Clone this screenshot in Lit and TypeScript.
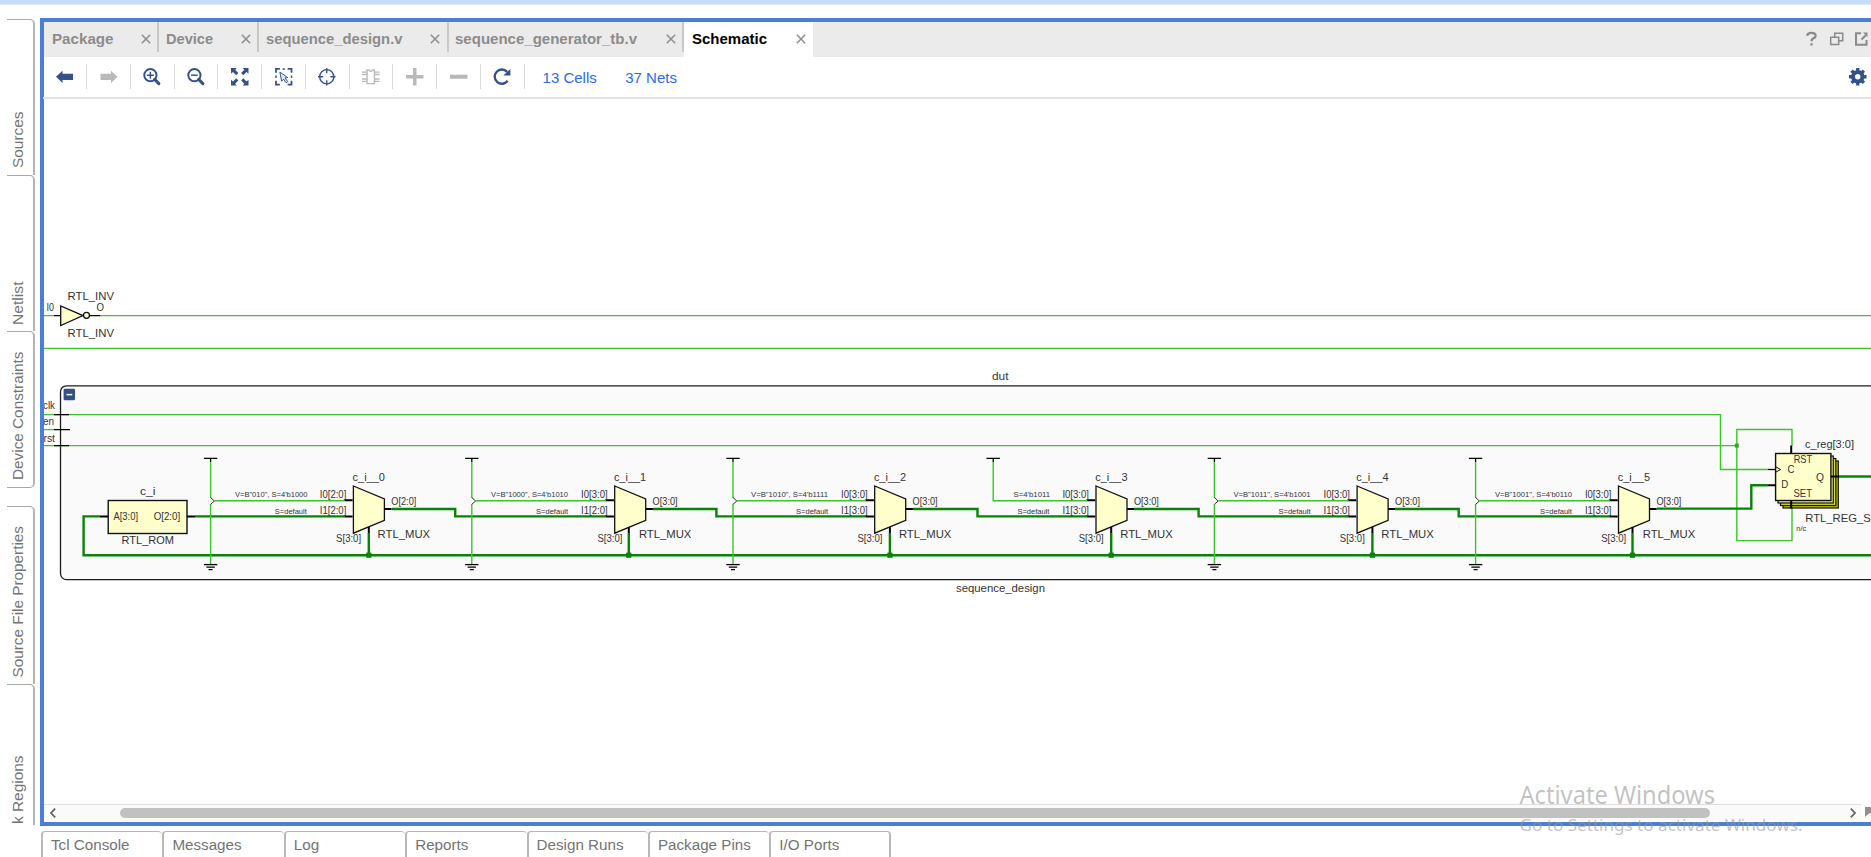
import { LitElement, html, svg, css } from "lit";
import { customElement } from "lit/decorators.js";

const GREEN = "#3cc52a";
const BUS = "#078407";

const label = (x: number, y: number, w: number, s: string, size = 11.5) =>
  svg`<text x=${x} y=${y} font-size=${size} textLength=${w} lengthAdjust="spacingAndGlyphs">${s}</text>`;
const wire = (d: string) => svg`<path d=${d} stroke=${GREEN} stroke-width="1.4" fill="none"/>`;
const bus = (d: string) => svg`<path d=${d} stroke=${BUS} stroke-width="2.4" fill="none"/>`;
const pin = (d: string, w = 2) => svg`<path d=${d} stroke="#000" stroke-width=${w} fill="none"/>`;

interface Mux {
  x: number; s: number; rail: number; out: string; in0: string; in1: string;
  value: string; vx: number; vw: number; from: string; ground: boolean;
}
const muxes: Mux[] = [
  { x: 352.6, s: 368.8, rail: 210.6, out: "O[2:0]", in0: "I0[2:0]", in1: "I1[2:0]", value: `V=B"010", S=4'b1000`, vx: 235, vw: 72.5, from: "M195 516.4", ground: true },
  { x: 613.9, s: 628.8, rail: 471.8, out: "O[3:0]", in0: "I0[3:0]", in1: "I1[2:0]", value: `V=B"1000", S=4'b1010`, vx: 491, vw: 77, from: "M392 509H455.2V516.4", ground: true },
  { x: 873.9, s: 889.9, rail: 733, out: "O[3:0]", in0: "I0[3:0]", in1: "I1[3:0]", value: `V=B"1010", S=4'b1111`, vx: 751, vw: 77, from: "M653 509H716.4V516.4", ground: true },
  { x: 1095.2, s: 1111.2, rail: 993.2, out: "O[3:0]", in0: "I0[3:0]", in1: "I1[3:0]", value: `S=4'b1011`, vx: 1013.5, vw: 36.5, from: "M913 509H977.5V516.4", ground: false },
  { x: 1356.3, s: 1372.4, rail: 1214.4, out: "O[3:0]", in0: "I0[3:0]", in1: "I1[3:0]", value: `V=B"1011", S=4'b1001`, vx: 1233.5, vw: 77, from: "M1134 509H1198.6V516.4", ground: true },
  { x: 1617.7, s: 1632.5, rail: 1475.6, out: "O[3:0]", in0: "I0[3:0]", in1: "I1[3:0]", value: `V=B"1001", S=4'b0110`, vx: 1495, vw: 77, from: "M1395 509H1458.7V516.4", ground: true },
];

const muxView = (m: Mux, i: number) => {
  const { x, s, rail } = m;
  return svg`
    ${bus(`${m.from}H${x - 8}`)}
    ${m.ground
      ? svg`${wire(`M${rail} 462V498M${rail} 504V564M${rail + 4} 500.7H${x - 8}`)}
          <path d=${`M${rail} 497.5L${rail + 3.8} 501L${rail} 504.3`} stroke="#333" stroke-width="1" fill="none"/>
          ${pin(`M${rail - 6.7} 564.6H${rail + 6.7}`, 1.3)}
          ${pin(`M${rail - 4.2} 567.1H${rail + 4.2}M${rail - 2} 569.6H${rail + 2}`, 1.3)}`
      : wire(`M${rail} 462V500.7H${x - 8}`)}
    ${pin(`M${rail - 6.7} 458.4H${rail + 6.7}M${rail} 458.4V462`, 1.3)}
    ${bus(`M${s} 533V555`)}
    <rect x=${s - 2.6} y="552.6" width="5.2" height="5.2" fill=${BUS}/>
    <path d=${`M${x + 0.8} 486L${x + 31.8} 499V520.3L${x + 0.8} 533.2Z`} fill="#ffffcc" stroke="#111" stroke-width="1.3"/>
    ${pin(`M${x - 8} 500.2H${x}M${x - 8} 516.4H${x}M${x + 32} 509H${x + 39}M${s} 527V533`)}
    ${label(x, 480.6, 32.3, `c_i__${i}`)}
    ${label(x - 32.8, 497.8, 26.5, m.in0, 11)}
    ${label(x - 32.8, 514, 26.5, m.in1, 11)}
    ${label(x + 38.7, 505.3, 25, m.out, 11)}
    ${label(x - 16.5, 541.5, 25, "S[3:0]", 11)}
    ${label(x + 25, 537.8, 52.5, "RTL_MUX")}
    ${label(m.vx, 497.3, m.vw, m.value, 7)}
    ${label(x - 77.8, 513.7, 32, "S=default", 7)}`;
};

@customElement("schematic-canvas")
export class SchematicCanvas extends LitElement {
  static styles = css`
    :host { display: block; }
    svg { display: block; width: 100%; height: 100%; }
    text { font-family: "Liberation Sans", Arial, sans-serif; fill: #333; }
  `;
  render() {
    return html`<svg viewBox="44 99 1827 705" preserveAspectRatio="xMinYMin">
      ${wire("M44 315.6H54M100 315.6H1871M44 348.4H1871")}
      ${pin("M54 315.6H60.5M89 315.6H100", 1.3)}
      <path d="M60.7 306V325.6L83 315.6Z" fill="#ffffcc" stroke="#111" stroke-width="1.3"/>
      <circle cx="86.5" cy="315.3" r="3" fill="#ffffcc" stroke="#111" stroke-width="1.3"/>
      ${label(46.5, 311.4, 7.5, "I0", 10.5)} ${label(96.5, 311.4, 7.5, "O", 10.5)}
      ${label(67.5, 300.2, 46.5, "RTL_INV")} ${label(67.5, 336.6, 46.5, "RTL_INV")}

      <rect x="60.5" y="385.8" width="1830" height="193.8" rx="6" fill="#fafafa" stroke="#1c1c1c" stroke-width="1.3"/>
      ${label(992, 380.3, 16.5, "dut")} ${label(956, 591.7, 89, "sequence_design")}
      <rect x="63.6" y="388.8" width="11.4" height="11.4" rx="1.3" fill="#324f87"/>
      <path d="M66.5 394.6H72.3" stroke="#fff" stroke-width="1.5"/>

      ${wire("M44 414.6H1720.5V469.5H1768M44 429.6H54M44 445.6H1736.8M1792 446V429.5H1736.8V540.6H1792V508")}
      ${pin("M54 414.6H69M54 429.6H70M54 445.6H69", 1.3)}
      ${label(43, 409.3, 12, "clk", 10.5)} ${label(43, 425.3, 11, "en", 10.5)} ${label(43.5, 441.7, 11.5, "rst", 10.5)}
      <rect x="1734.8" y="443.6" width="4" height="4" fill="#2cab1e"/>

      ${bus("M1871 555.2H83.6V516.4H100")}
      ${bus("M1657 508.6H1751.3V485.2H1768M1838 476.5H1871")}
      <rect x="108.2" y="500.5" width="78.8" height="33" fill="#ffffcc" stroke="#111" stroke-width="1.4"/>
      ${pin("M100 516.4H108M187 516.4H195")}
      ${label(140, 495, 15.5, "c_i")} ${label(121.5, 544, 52.5, "RTL_ROM")}
      ${label(113.5, 520.4, 24.5, "A[3:0]", 11)} ${label(153.7, 520.4, 26.5, "O[2:0]", 11)}

      ${muxes.map(muxView)}

      <rect x="1783" y="461" width="55.3" height="47" fill="#b8b81e" stroke="#111" stroke-width="1.2"/>
      <rect x="1780.5" y="458.5" width="55.3" height="47" fill="#e0e040" stroke="#111" stroke-width="1.2"/>
      <rect x="1778" y="456" width="55.3" height="47" fill="#e8e890" stroke="#111" stroke-width="1.2"/>
      <rect x="1775.6" y="453.5" width="55.3" height="47" fill="#ffffcc" stroke="#111" stroke-width="1.4"/>
      ${pin("M1791.2 445.5V453M1791.2 501V508.5M1768 485.2H1775.5M1831 476.5H1838.5")}
      ${pin("M1768 469.5H1776", 1.3)}
      <path d="M1776 467L1780.6 469.5L1776 472" fill="none" stroke="#111" stroke-width="1"/>
      ${label(1805, 447.9, 49, "c_reg[3:0]")} ${label(1793.7, 463.2, 18.5, "RST")}
      ${label(1787.6, 473.4, 7, "C")} ${label(1781.3, 488, 7, "D")}
      ${label(1816, 480.5, 8, "Q")} ${label(1793.5, 496.9, 18.5, "SET")}
      ${label(1805.3, 521.5, 65.5, "RTL_REG_S")} ${label(1796.3, 530.9, 10, "n/c", 7)}
    </svg>`;
  }
}

const icon = (c: unknown) => html`<svg class="icon" viewBox="0 0 18 18">${c}</svg>`;
const cross = html`<svg class="cross" viewBox="0 0 10 10"><path d="M.8.8L9.2 9.2M9.2.8L.8 9.2" stroke="#8c8c8c" stroke-width="1.5"/></svg>`;
const N = "#33528c";
const G = "#b9b9b9";

const tools = [
  svg`<path d="M0 9L6.7 2.7V6H17.5V12.3H6.7V15.3Z" fill=${N}/>`,
  svg`<path d="M18 9L11.3 2.7V6H.5V12.3H11.3V15.3Z" fill=${G}/>`,
  svg`<circle cx="7.6" cy="7.4" r="6.3" fill="none" stroke=${N} stroke-width="2"/><path d="M4 7.4H11.2M7.6 3.8V11" stroke=${N} stroke-width="1.5"/><path d="M12 11.8L16.3 16" stroke=${N} stroke-width="3.2" stroke-linecap="round"/>`,
  svg`<circle cx="7.6" cy="7.4" r="6.3" fill="none" stroke=${N} stroke-width="2"/><path d="M4.2 7.4H11" stroke=${N} stroke-width="1.5"/><path d="M12 11.8L16.3 16" stroke=${N} stroke-width="3.2" stroke-linecap="round"/>`,
  svg`<path d="M0 0H6L4.3 1.8L7.6 5.2L5.4 7.4L2 4L0 6ZM18 0V6L16 4L12.6 7.4L10.4 5.2L13.7 1.8L12 0ZM0 18V12L2 14L5.4 10.6L7.6 12.8L4.3 16.2L6 18ZM18 18H12L13.7 16.2L10.4 12.8L12.6 10.6L16 14L18 12Z" fill=${N}/>`,
  svg`<path d="M1 5V1H5M13 1H17V5M17 13V17H13M5 17H1V13" fill="none" stroke=${N} stroke-width="1.8"/><path d="M7.8 1H10.2M17 7.8V10.2M1 7.8V10.2" fill="none" stroke=${N} stroke-width="1.5"/><path d="M5 4.2L13 9.8L10.3 10.3L13.2 14L11.4 15.2L8.8 11.5L6.8 13.6Z" fill="#dfe5ef" stroke=${N} stroke-width="1"/>`,
  svg`<circle cx="9" cy="9" r="7.3" fill="none" stroke=${N} stroke-width="1.4"/><path d="M9 0V5.3M9 12.7V18M0 9H5.3M12.7 9H18" stroke=${N} stroke-width="1.4"/>`,
  svg`<path d="M5.2 2H7.5C7.5 4 10.5 4 10.5 2H12.8V16H5.2ZM0 4.2H4.5M0 6.7H4.5M0 11.3H4.5M0 13.8H4.5M13.5 4.2H18M13.5 6.7H18M13.5 11.3H18M13.5 13.8H18" fill="none" stroke=${G} stroke-width="1.4"/>`,
  svg`<path d="M0 9H18M9 0V18" stroke=${G} stroke-width="3.6"/>`,
  svg`<path d="M0 9H18" stroke=${G} stroke-width="4.2"/>`,
  svg`<path d="M15 13.2A7.3 7.3 0 1 1 14.5 4" fill="none" stroke=${N} stroke-width="2.5"/><path d="M17.9 1V7.8H10.6Z" fill=${N}/>`,
];

const fileTabs = [
  ["Package", 114, 61.5], ["Device", 100, 47], ["sequence_design.v", 189.5, 136.5], ["sequence_generator_tb.v", 235.5, 182],
] as const;
const sideTabs = [
  ["Sources", 156, 7, 56.5], ["Netlist", 156, 6, 43.5], ["Device Constraints", 156.5, 6.5, 128.5],
  ["Source File Properties", 178.5, 7, 151.5], ["k Regions", 141, 0, 68.5],
] as const;
const bottomTabs = ["Tcl Console", "Messages", "Log", "Reports", "Design Runs", "Package Pins", "I/O Ports"];

@customElement("app-root")
export class AppRoot extends LitElement {
  static styles = css`
    :host { display: block; width: 1871px; height: 857px; position: relative; overflow: hidden; background: #fff; font: 15px "Liberation Sans", Arial, sans-serif; }
    * { box-sizing: border-box; }
    svg { display: block; flex: none; }
    .top { height: 5px; background: #cbddff; border-bottom: 1px solid #e0eaff; }
    .main { display: flex; height: 820px; }
    .side { width: 40px; padding: 14px 5px 0 7px; height: 820px; display: flex; flex-direction: column; overflow: hidden; }
    .stab { flex: none; width: 28px; border: 2px solid #b4b4b4; border-left: 0; border-top: 1px solid #a8a8a8; border-bottom: 0; border-radius: 0 5px 0 0; display: flex; justify-content: center; align-items: flex-end; padding-right: 4px; }
    .stab.end { border-bottom: 1px solid #a8a8a8; border-radius: 0 5px 5px 0; margin-bottom: 18px; }
    .stab text { font-size: 15.5px; fill: #737373; }
    .panel { margin-top: 12.5px; flex: 1; height: 808px; border: 4px solid #4a7fd5; border-right: 0; display: flex; flex-direction: column; min-width: 0; }
    .tabs { height: 35px; flex: none; background: #ebebeb; display: flex; align-items: stretch; color: #8c8c8c; }
    .tab { display: flex; align-items: center; justify-content: space-between; padding: 0 7.5px 1px 7.5px; }
    .tab.on { width: 129px; color: #000; background: #fff; padding-left: 8px; }
    .name { overflow: visible; height: 18px; }
    .name text { font-weight: bold; font-size: 15px; fill: currentColor; }
    .div { width: 2px; height: 30px; background: #c8c8c8; margin-right: -1px; margin-left: -1px; flex: none; }
    .gap { width: 1px; flex: none; }
    .cross { width: 10px; height: 10px; }
    .wins { margin-left: auto; display: flex; align-items: center; }
    .tools { height: 42px; flex: none; display: flex; align-items: center; border-bottom: 2px solid #e2e2e2; margin-left: -0.7px; }
    .tool { width: 43.75px; height: 25px; flex: none; display: flex; align-items: center; justify-content: center; border-right: 1.6px solid #dadada; }
    .icon { width: 17.5px; height: 17.5px; overflow: visible; }
    .count { color: #2a6af0; font-size: 15px; padding-top: 1px; }
    .gear { margin-left: auto; width: 18px; margin-right: 4.5px; }
    schematic-canvas { flex: none; height: 705px; }
    .scroll { height: 17px; flex: none; display: flex; align-items: center; background: #fafafa; border-top: 1px solid #dedede; }
    .thumb { height: 10px; width: 1590px; border-radius: 5px; background: #c1c1c1; margin-left: 64px; }
    .left { margin-left: 6px; }
    .right { margin-left: 139.5px; }
    .corner { width: 10px; height: 17px; background: #fff; margin-left: auto; padding: 3px 0 0 4px; overflow: hidden; }
    .bottom { display: flex; padding: 5.5px 0 0 41px; height: 32px; }
    .btab { width: 121.4px; flex: none; height: 28px; border: 2px solid #b8b8b8; border-top-width: 1.5px; border-right-width: 0; border-bottom: 0; border-radius: 4px 4px 0 0; padding: 4.5px 0 0 8px; color: #737373; font-size: 15.2px; }
    .btab:last-child { border-right-width: 2px; }
    .mark { position: absolute; left: 1510px; top: 775px; }
    .mark text { font-family: "Noto Sans", "Open Sans", sans-serif; fill: #999; fill-opacity: .6; }
  `;
  name(t: string, w: number) {
    return html`<svg class="name" width=${w}><text x="0" y="14" textLength=${w} lengthAdjust="spacingAndGlyphs">${t}</text></svg>`;
  }
  render() {
    return html`
      <div class="top"></div>
      <div class="main">
        <div class="side">
          ${sideTabs.map(([t, h, pad, len], i) => html`
            <div class="stab ${i === 2 ? "end" : ""}" style="height:${h}px">
              <svg width="20" height=${h - 2}>
                <text transform="translate(14.5 ${h - 2 - pad + (i === 4 ? -1 : 0)}) rotate(-90)" textLength=${len} lengthAdjust="spacingAndGlyphs">${t}</text>
              </svg>
            </div>`)}
        </div>
        <div class="panel">
          <div class="tabs">
            ${fileTabs.map(([t, w, len]) => html`<div class="tab" style="width:${w}px">${this.name(t, len)}${cross}</div><div class="div"></div>`)}
            <div class="gap"></div>
            <div class="tab on">${this.name("Schematic", 75)}${cross}</div>
            <div class="wins">
              <svg width="66" height="16" viewBox="0 0 66 16" fill="none" stroke="#8a8a8a" stroke-width="1.5">
                <path d="M2 4.8Q2.6 1.8 6.2 1.8Q10.6 1.8 10.6 4.7Q10.6 6.4 8.4 7.4Q6.5 8.2 6.5 10.3M6.5 12.2V14.6" stroke-width="2.3"/>
                <path d="M29.7 6.2V2.2H37.7V9.8H34M25.7 6.2H33.7V13.6H25.7Z"/>
                <path d="M56 2.3H51V13.7H61.5V9" stroke-width="2"/><path d="M56.5 8.5L61 4" stroke-width="2"/><path d="M58 1.5H62.5V6Z" fill="#8a8a8a" stroke="none"/>
              </svg>
            </div>
          </div>
          <div class="tools">
            ${tools.map((t) => html`<div class="tool">${icon(t)}</div>`)}
            <span class="count" style="margin-left:18px">13 Cells</span>
            <span class="count" style="margin-left:28.5px">37 Nets</span>
            <div class="gear">${icon(svg`<circle cx="9" cy="9" r="4.9" fill="none" stroke=${N} stroke-width="4.2"/>
              ${[0, 45, 90, 135].map((a) => svg`<path transform=${`rotate(${a} 9 9)`} d="M9 0V3.5M9 14.5V18" stroke=${N} stroke-width="3.4"/>`)}`)}</div>
          </div>
          <schematic-canvas></schematic-canvas>
          <div class="scroll">
            <svg class="left" width="6" height="10"><path d="M5.2.6L1 5L5.2 9.4" fill="none" stroke="#666" stroke-width="1.8"/></svg>
            <div class="thumb"></div>
            <svg class="right" width="6" height="10"><path d="M.8.6L5 5L.8 9.4" fill="none" stroke="#666" stroke-width="1.8"/></svg>
            <div class="corner"><svg width="8" height="10"><path d="M0 0H8V7.5L4.5 6L0 10Z" fill="#8f8f8f"/></svg></div>
          </div>
        </div>
      </div>
      <div class="bottom">${bottomTabs.map((t) => html`<div class="btab">${t}</div>`)}</div>
      <svg class="mark" width="310" height="70">
        <text x="9.5" y="28.6" font-size="24.5" textLength="195.5" lengthAdjust="spacingAndGlyphs">Activate Windows</text>
        <text x="9.5" y="56" font-size="17" textLength="283" lengthAdjust="spacingAndGlyphs">Go to Settings to activate Windows.</text>
      </svg>`;
  }
}
